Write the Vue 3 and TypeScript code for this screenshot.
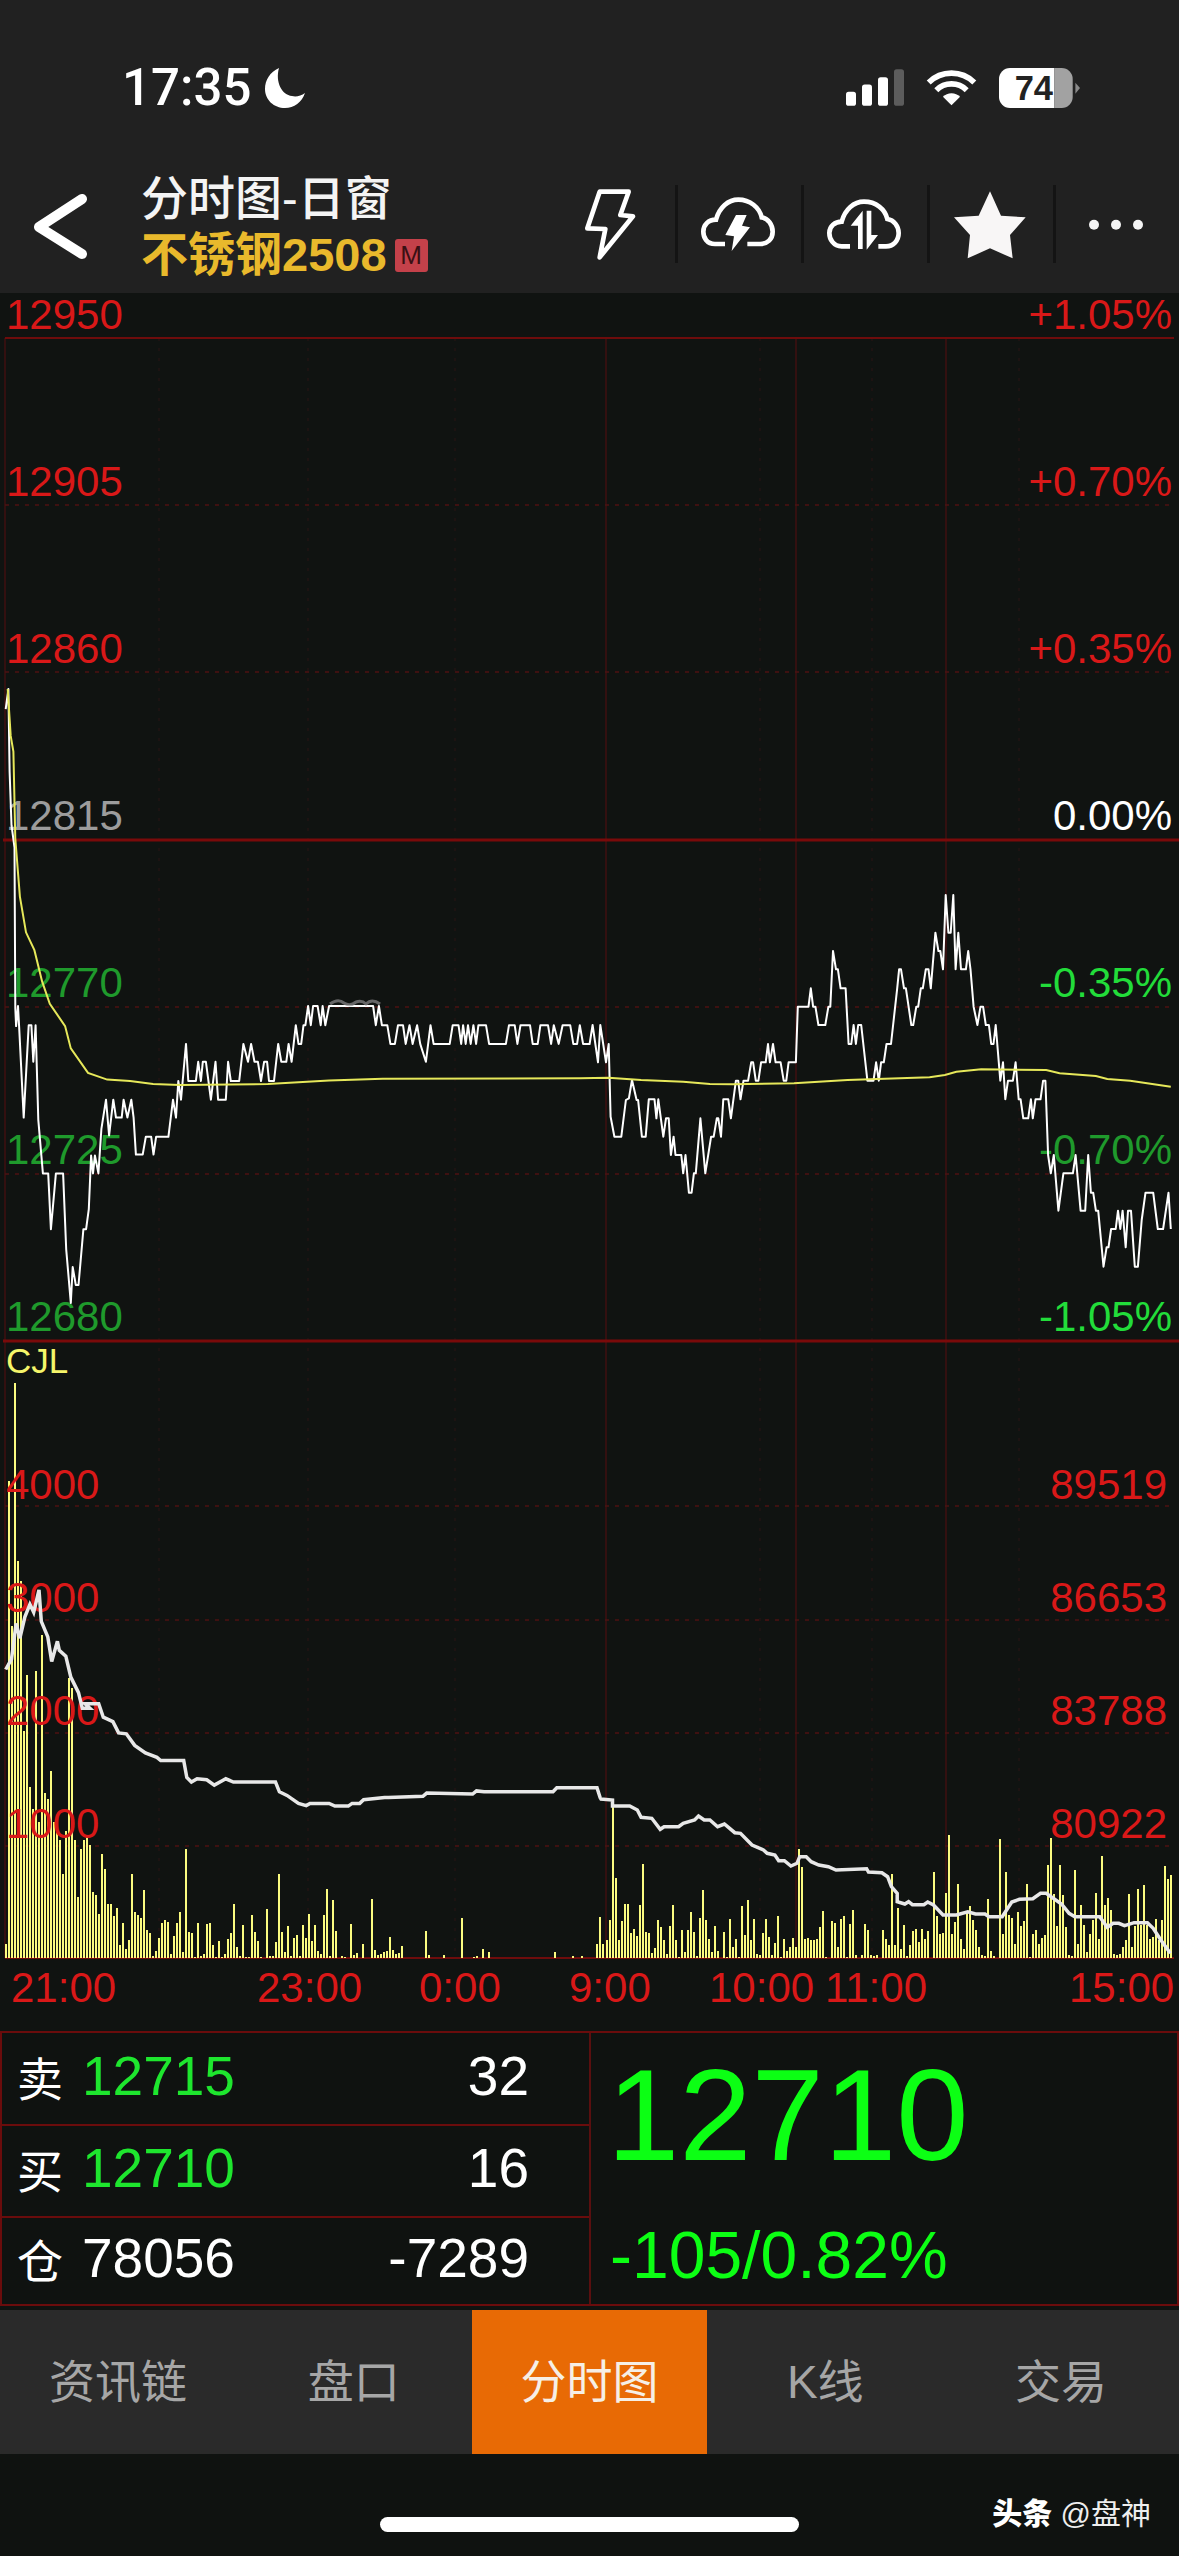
<template>
  <div class="phone">
    <!-- status bar -->
    <div class="status">
      <span class="clock">17:35</span>
      <svg class="moon" viewBox="0 0 40 40">
        <path d="M14 0C5 4 0 12 0 21c0 11 9 19 20 19 9 0 17-6 20-15-4 3-9 4-13 3C17 27 10 14 14 0Z" fill="#fff" />
      </svg>
      <div class="status-icons">
        <svg class="signal" viewBox="48 42 174 110">
          <rect x="48" y="110" width="30" height="42" rx="8" fill="#fff" />
          <rect x="96" y="88" width="30" height="64" rx="8" fill="#fff" />
          <rect x="144" y="66" width="30" height="86" rx="8" fill="#fff" />
          <rect x="192" y="42" width="30" height="110" rx="8" fill="#5c5c5c" />
        </svg>
        <svg class="wifi" viewBox="285 42 160 112">
          <path d="M296 83A98 98 0 0 1 434 83" fill="none" stroke="#fff" stroke-width="17" />
          <path d="M319 106A65 65 0 0 1 411 106" fill="none" stroke="#fff" stroke-width="17" />
          <path d="M365 152L339 126A37 37 0 0 1 391 126Z" fill="#fff" />
        </svg>
        <svg class="battery" viewBox="508 38 250 120">
          <path d="M541 38H675V158H541A33 33 0 0 1 508 125V71A33 33 0 0 1 541 38Z" fill="#fff" />
          <path d="M675 38H697A33 33 0 0 1 730 71V125A33 33 0 0 1 697 158H675Z" fill="#a2a2a2" />
          <path d="M738 82L752 98L738 115Z" fill="#8a8a8a" />
          <text x="613" y="135" text-anchor="middle" class="battery-text">74</text>
        </svg>
      </div>
    </div>

    <!-- nav -->
    <div class="nav">
      <svg class="back" viewBox="0 0 60 70">
        <path d="M51 7L8 35L51 62" fill="none" stroke="#fff" stroke-width="10" stroke-linecap="round" stroke-linejoin="round" />
      </svg>
      <div class="title">
        <div class="title-main">分时图-日窗</div>
        <div class="title-sub">不锈钢2508<span class="badge">M</span></div>
      </div>
      <div class="actions">
        <div class="action">
          <svg viewBox="12 25 240 240">
            <path d="M95 48H182L157 118L195 122L95 245L112 160L58 158Z" fill="none" stroke="#fff" stroke-width="14" stroke-linejoin="round" />
          </svg>
        </div>
        <div class="action sep">
          <svg viewBox="384 25 240 240">
            <path d="M465 205H435C410 205 400 185 400 168C400 148 415 132 438 132C448 95 475 72 505 72C540 72 568 95 575 125C595 128 608 148 608 168C608 190 592 205 570 205H532" fill="none" stroke="#fff" stroke-width="14" />
            <path d="M498 118H530L516 150L540 155L485 226L492 182L466 178Z" fill="#fff" />
          </svg>
        </div>
        <div class="action sep">
          <svg viewBox="762 25 240 240">
            <path d="M840 212H815C790 212 778 190 778 172C778 152 795 138 815 138C825 100 852 78 882 78C918 78 945 100 952 130C972 133 986 152 986 172C986 195 970 212 948 212H925" fill="none" stroke="#fff" stroke-width="14" />
            <path d="M878 105V220H864V150H842Z" fill="#fff" />
            <path d="M890 105H904V178H924L890 222Z" fill="#fff" />
          </svg>
        </div>
        <div class="action sep">
          <svg viewBox="390 25 240 240">
            <path d="M510 47L543 120L617 125L570 178L578 248L510 218L443 248L450 178L402 125L476 120Z" fill="#f8f6f6" />
          </svg>
        </div>
        <div class="action sep">
          <svg viewBox="768 25 240 240">
            <circle cx="822" cy="147" r="15" fill="#f4f4f4" />
            <circle cx="888" cy="147" r="15" fill="#f4f4f4" />
            <circle cx="954" cy="147" r="15" fill="#f4f4f4" />
          </svg>
        </div>
      </div>
    </div>

    <!-- chart, coordinates are page y -->
    <svg class="chart" viewBox="0 293 1179 1738">
      <line v-for="x in faintX" :key="'f' + x" :x1="x" :x2="x" y1="338" y2="1958" class="grid-faint" />
      <line v-for="x in mainX" :key="'v' + x" :x1="x" :x2="x" y1="338" y2="1958" class="grid-v" />
      <line v-for="y in dashY" :key="'d' + y" x1="5" x2="1174" :y1="y" :y2="y" class="grid-dash" />
      <line v-for="y in solidY" :key="'s' + y" x1="3" x2="1179" :y1="y" :y2="y" class="grid-solid" />
      <line x1="5" x2="1174" y1="338" y2="338" class="grid-top" />
      <line x1="5" x2="1174" y1="1958" y2="1958" class="grid-top" />

      <text v-for="l in priceLabels" :key="l.text" x="6" :y="l.y" :class="['axis', l.cls]">{{ l.text }}</text>
      <text v-for="l in pctLabels" :key="l.text" x="1172" :y="l.y" text-anchor="end" :class="['axis', l.cls]">{{ l.text }}</text>

      <polyline :points="pricePts" class="line-price" />
      <polyline :points="avgPts" class="line-avg" />
      <path d="M330 1004q8 -6 14 -1q6 4 12 -1q6 -2 10 2q6 -6 14 0" class="smudge" />

      <path :d="volumePath" class="bars" />
      <text x="6" y="1373" class="cjl">CJL</text>
      <text v-for="l in volLabels" :key="l.text" x="6" :y="l.y" class="axis red">{{ l.text }}</text>
      <text v-for="l in oiLabels" :key="l.text" x="1167" :y="l.y" text-anchor="end" class="axis red">{{ l.text }}</text>
      <polyline :points="oiPts" class="line-oi" />

      <text v-for="t in timeLabels" :key="t.text" :x="t.x" y="2002" class="axis time">{{ t.text }}</text>
    </svg>

    <!-- quote panel -->
    <div class="quote">
      <div class="book">
        <div class="book-row">
          <span class="book-label">卖</span><span class="book-price green">12715</span><span class="book-qty">32</span>
        </div>
        <div class="book-row">
          <span class="book-label">买</span><span class="book-price green">12710</span><span class="book-qty">16</span>
        </div>
        <div class="book-row">
          <span class="book-label">仓</span><span class="book-price">78056</span><span class="book-qty">-7289</span>
        </div>
      </div>
      <div class="last">
        <div class="last-price">12710</div>
        <div class="last-delta">-105/0.82%</div>
      </div>
    </div>

    <!-- tabs -->
    <div class="tabs">
      <div v-for="t in tabs" :key="t" :class="['tab', { active: t === '分时图' }]">{{ t }}</div>
    </div>

    <div class="bottom">
      <div class="home"></div>
      <div class="credit"><b>头条</b> @盘神</div>
    </div>
  </div>
</template>

<script setup lang="ts">
type Pt = [number, number];

// sampled points are stored in sampling units, then scaled into chart px
const scale = (raw: string, sx: number, sy: number, ox: number, oy: number): Pt[] =>
  raw
    .trim()
    .split(/\s+/)
    .map((p) => {
      const [x, y] = p.split(",").map(Number);
      return [x / sx + ox, y / sy + oy] as Pt;
    });

const toPoints = (pts: Pt[]) => pts.map(([x, y]) => `${x.toFixed(1)},${y.toFixed(1)}`).join(" ");

const priceNight = `15,110 22,65 25,250 30,370 38,420 40,780 42,820 47,775 50,820 62,1025 75,818 82,818 87,900 93,818
100,1030 112,1150 126,1150 133,1275 146,1150 165,1150 173,1320 185,1440 190,1360 198,1400 205,1400 218,1275 225,1275
232,1230 238,1110 243,1150 248,1110 257,1150 265,1050 277,985 285,1065 296,985 303,1025 318,1025 323,985 333,1025
343,985 349,1025 355,1108 373,1108 381,1068 395,1068 401,1108 408,1068 440,1068 452,985 460,1025 466,943 473,985
486,860 492,943 512,943 518,900 525,943 530,900 538,900 551,985 563,900 570,985 590,985 596,900 603,943 625,943
636,860 648,900 656,860 665,900 674,900 682,943 690,900 698,900 703,943 716,943 727,860 735,900 748,900 754,860
762,900 773,818 780,860 787,860 793,818 798,818 805,775 812,818 818,775 830,775 838,818 843,775 850,818 860,775
975,775 982,818 990,775 998,818 1012,818 1020,860 1032,860 1040,818 1053,818 1060,860 1070,818 1078,860 1090,818
1098,860 1113,900 1125,818 1133,860 1175,860 1183,818 1198,818 1205,860 1210,818 1217,860 1223,818 1230,860 1237,818
1244,860 1250,818 1270,818 1278,860 1322,860 1330,818 1345,818 1352,860 1360,818 1385,818 1392,860 1405,860 1412,818
1432,818 1440,860 1447,818 1460,860 1470,818 1490,818 1498,860 1508,860 1515,818`;

const priceDay = `8,612 25,612 33,555 47,667 53,555 68,667 75,612 80,830 90,890 108,890 120,780 128,775 136,720 148,780
152,780 162,890 172,890 180,778 195,778 200,835 205,778 218,890 225,835 232,835 238,945 245,890 250,945 265,945 270,1000
276,945 285,1058 292,1058 298,1000 303,1000 315,835 328,1000 343,890 350,890 358,835 362,835 369,890 375,778 388,778
395,835 408,722 414,722 420,778 428,722 440,722 448,667 453,667 460,722 467,722 474,667 486,667 492,612 497,667 505,612
512,667 525,667 533,722 540,722 546,667 565,667 570,500 598,500 604,445 610,500 616,500 624,555 642,555 650,500 655,500
662,333 670,388 675,388 682,445 695,445 703,612 710,612 716,555 722,612 728,555 736,555 752,722 768,722 775,667 782,722
788,667 795,667 802,612 814,612 830,445 835,388 840,388 848,445 853,445 867,555 872,555 880,500 885,500 892,445 897,445
905,388 912,388 918,445 930,278 938,333 943,333 950,388 957,165 964,278 970,278 977,165 983,388 990,278 997,388 1010,388
1016,333 1022,388 1030,500 1040,555 1048,500 1055,500 1062,555 1070,555 1076,612 1082,612 1088,555 1100,722 1107,667
1113,778 1120,722 1133,722 1140,667 1148,778 1153,778 1160,835 1173,835 1180,778 1185,835 1192,778 1205,778 1212,722
1218,722 1225,945 1232,1000 1240,945 1252,1112 1265,1000 1290,1000 1297,945 1310,1112 1322,1112 1330,945 1337,1058
1343,1058 1350,1112 1356,1112 1370,1280 1378,1222 1383,1222 1390,1167 1402,1167 1408,1112 1414,1167 1420,1112 1428,1222
1434,1112 1442,1112 1452,1280 1460,1280 1470,1140 1480,1058 1500,1058 1512,1167 1526,1167 1540,1058 1546,1167`;

const avgNight = `20,65 28,170 35,205 40,400 52,530 68,610 90,650 110,720 130,770 170,820 185,870 230,925 280,940 340,943
400,950 470,952 700,950 860,942 1000,938 1515,937`;

const avgDay = `0,715 75,713 160,720 270,725 340,732 400,733 560,730 700,720 915,712 955,705 985,695 1050,688 1220,690
1255,700 1350,708 1380,717 1440,722 1546,740`;

const oiNight = `15,738 30,715 42,635 52,668 65,620 78,592 88,610 102,560 108,630 125,665 135,720 150,675 155,695 172,708
185,755 205,790 215,825 235,825 222,815 258,815 270,845 295,855 310,880 330,882 352,908 380,925 410,935 420,942 480,942
488,980 500,990 515,983 540,985 560,997 590,983 610,990 720,990 730,1012 750,1020 780,1038 800,1043 810,1038 860,1038
875,1044 910,1044 920,1038 940,1038 950,1030 1005,1025 1015,1025 1105,1022 1115,1015 1235,1017 1245,1010 1265,1012
1445,1012 1455,1003 1560,1003 1568,1025`;

const oiDay = `55,597 85,600 85,618 130,618 150,630 160,652 188,655 210,688 220,680 258,680 270,670 300,660 310,648
325,660 340,660 360,680 378,672 405,698 420,700 450,735 480,750 490,760 510,765 520,782 535,782 552,798 568,790 575,770
592,770 605,785 625,795 650,800 670,810 750,806 755,816 790,818 805,830 815,860 830,880 830,905 850,912 860,905 870,914
900,914 910,906 925,915 950,945 985,945 1015,935 1035,942 1060,942 1070,950 1105,950 1130,906 1150,898 1185,896 1205,880
1220,880 1260,912 1280,940 1295,950 1360,950 1380,982 1395,970 1410,970 1425,977 1450,968 1485,968 1500,985 1520,1020
1545,1060`;

const pricePts = toPoints([...scale(priceNight, 2.613, 2.24, 0, 660), ...scale(priceDay, 2.617, 3, 580, 840)]);
const avgPts = toPoints([...scale(avgNight, 2.613, 2.24, 0, 660), ...scale(avgDay, 2.617, 3, 580, 840)]);
const oiPts = toPoints([...scale(oiNight, 2.613, 2.24, 0, 1340), ...scale(oiDay, 2.617, 3, 580, 1600)]);

// volume bars, one per minute slot
const volNight = [
  14, 477, 332, 575, 397, 377, 227, 283, 171, 149, 287, 136, 323, 165, 159, 187, 136, 127, 118, 84, 127, 280, 270, 118, 61,
  109, 118, 122, 113, 66, 63, 44, 104, 89, 54, 54, 42, 50, 13, 35, 9, 18, 84, 46, 43, 40, 68, 28, 25, 2, 7, 20, 35, 38, 36,
  4, 22, 35, 46, 6, 109, 26, 25, 1, 35, 2, 4, 34, 35, 13, 1, 17, 1, 4, 19, 25, 54, 11, 2, 33, 1, 1, 43, 26, 17, 1, 0, 49, 2,
  2, 16, 84, 26, 6, 32, 2, 20, 23, 2, 33, 20, 44, 17, 33, 7, 4, 43, 69, 2, 58, 27, 0, 2, 1, 0, 34, 3, 5, 0, 14, 0, 0, 59, 8,
  3, 4, 6, 7, 21, 8, 4, 5, 12,
];
const volSparse: Record<number, number> = { 140: 27, 141: 3, 146: 3, 152: 40, 156: 1, 157: 2, 159: 9, 161: 6, 183: 6, 189: 2, 192: 2 };
const volDay = [
  14, 41, 14, 18, 38, 151, 80, 18, 37, 54, 54, 25, 29, 22, 53, 94, 26, 25, 5, 10, 38, 31, 18, 4, 32, 53, 18, 1, 28, 6, 28,
  46, 26, 2, 40, 68, 38, 19, 6, 32, 7, 0, 26, 1, 39, 11, 19, 1, 52, 23, 58, 18, 39, 4, 3, 25, 39, 21, 3, 15, 42, 1, 19, 7,
  11, 20, 11, 109, 91, 19, 20, 18, 18, 19, 31, 47, 1, 0, 37, 35, 11, 39, 42, 1, 34, 48, 3, 0, 3, 34, 28, 3, 2, 3, 0, 28, 19,
  13, 84, 13, 50, 9, 33, 2, 13, 27, 29, 16, 29, 19, 27, 0, 86, 42, 24, 25, 65, 123, 24, 36, 74, 19, 9, 46, 52, 38, 28, 11,
  3, 2, 59, 7, 2, 0, 119, 24, 86, 43, 40, 14, 46, 32, 37, 74, 1, 24, 28, 14, 20, 23, 93, 120, 64, 32, 93, 63, 31, 3, 2, 88,
  14, 53, 33, 6, 24, 38, 65, 19, 102, 53, 60, 48, 4, 3, 4, 11, 18, 64, 11, 32, 69, 33, 73, 33, 19, 21, 39, 18, 38, 92, 79, 83,
];

const baseY = 1958;
const slotX = (i: number) => Math.round(5.7 + 3.004 * i);
const volumePath = [
  ...volNight.map((h, i) => [i, h]),
  ...Object.entries(volSparse).map(([i, h]) => [Number(i), h]),
  ...volDay.map((h, i) => [197 + i, h]),
]
  .filter(([, h]) => h > 0)
  .map(([i, h]) => `M${slotX(i)} ${baseY}v${-h}`)
  .join("");

const mainX = [5, 606, 796, 946];
const faintX = [159, 308, 455, 760, 872, 1019];
const dashY = [505, 672, 1007, 1174, 1506, 1620, 1733, 1846];
const solidY = [840, 1341];

const priceLabels = [
  { text: "12950", y: 329, cls: "red" },
  { text: "12905", y: 496, cls: "red" },
  { text: "12860", y: 663, cls: "red" },
  { text: "12815", y: 830, cls: "gray" },
  { text: "12770", y: 997, cls: "dim" },
  { text: "12725", y: 1164, cls: "dim" },
  { text: "12680", y: 1331, cls: "dim" },
];
const pctLabels = [
  { text: "+1.05%", y: 329, cls: "red" },
  { text: "+0.70%", y: 496, cls: "red" },
  { text: "+0.35%", y: 663, cls: "red" },
  { text: "0.00%", y: 830, cls: "white" },
  { text: "-0.35%", y: 997, cls: "bright" },
  { text: "-0.70%", y: 1164, cls: "dim" },
  { text: "-1.05%", y: 1331, cls: "bright" },
];
const volLabels = [
  { text: "4000", y: 1499 },
  { text: "3000", y: 1612 },
  { text: "2000", y: 1725 },
  { text: "1000", y: 1838 },
];
const oiLabels = [
  { text: "89519", y: 1499 },
  { text: "86653", y: 1612 },
  { text: "83788", y: 1725 },
  { text: "80922", y: 1838 },
];
const timeLabels = [
  { text: "21:00", x: 11 },
  { text: "23:00", x: 257 },
  { text: "0:00", x: 419 },
  { text: "9:00", x: 569 },
  { text: "10:00", x: 709 },
  { text: "11:00", x: 825 },
  { text: "15:00", x: 1069 },
];

const tabs = ["资讯链", "盘口", "分时图", "K线", "交易"];
</script>

<style>
html,
body {
  margin: 0;
  background: #0f1210;
}
</style>

<style scoped>
.phone {
  width: 1179px;
  height: 2556px;
  display: flex;
  flex-direction: column;
  background: #0f1210;
  font-family: "Liberation Sans", "Noto Sans CJK SC", sans-serif;
  overflow: hidden;
}

.status {
  height: 175px;
  flex: none;
  display: flex;
  align-items: center;
  padding-left: 122px;
  box-sizing: border-box;
  background: #212121;
  color: #fff;
}

.clock {
  font-family: Roboto, "Liberation Sans", sans-serif;
  font-size: 51px;
  font-weight: 500;
  line-height: 1;
}

.moon {
  width: 40px;
  height: 40px;
  margin-left: 14px;
}

.status-icons {
  margin-left: auto;
  margin-right: 97px;
  display: flex;
  align-items: center;
  gap: 21px;
}

.signal {
  width: 58px;
  height: 37px;
}

.wifi {
  width: 53px;
  height: 37px;
}

.battery {
  width: 83px;
  height: 40px;
}

.battery-text {
  font-family: "Liberation Sans", sans-serif;
  font-size: 104px;
  font-weight: 700;
  fill: #222;
}

.nav {
  height: 118px;
  flex: none;
  display: flex;
  align-items: center;
  padding-bottom: 14px;
  box-sizing: border-box;
  background: #212121;
  position: relative;
}

.back {
  width: 60px;
  height: 70px;
  margin-left: 31px;
  flex: none;
}

.title {
  margin-left: 50px;
  display: flex;
  flex-direction: column;
}

.title-main {
  font-size: 47px;
  font-weight: 500;
  line-height: 56px;
  color: #f4f4f4;
}

.title-sub {
  display: flex;
  align-items: center;
  font-size: 47px;
  line-height: 56px;
  font-weight: 700;
  color: #e9b92c;
}

.badge {
  width: 33px;
  height: 33px;
  margin-left: 8px;
  border-radius: 3px;
  background: #c4414a;
  color: #3a1014;
  font-size: 26px;
  font-weight: 400;
  line-height: 33px;
  text-align: center;
}

.actions {
  margin-left: auto;
  display: flex;
  margin-bottom: 7px;
}

.action {
  width: 126px;
  height: 78px;
  display: flex;
  align-items: center;
  justify-content: center;
  box-sizing: border-box;
}

.action.sep {
  box-shadow: inset 3px 0 0 #141414;
}

.action svg {
  width: 80px;
  height: 80px;
  flex: none;
}

.chart {
  display: block;
  width: 1179px;
  height: 1738px;
  flex: none;
  background: #101311;
  overflow: visible;
}

.grid-faint {
  stroke: #2b1414;
  stroke-width: 1;
  stroke-dasharray: 3 7;
}

.grid-v {
  stroke: #3f1010;
  stroke-width: 1.5;
}

.grid-dash {
  stroke: #4d1212;
  stroke-width: 1.5;
  stroke-dasharray: 4 6;
}

.grid-solid {
  stroke: #7a0a0a;
  stroke-width: 3;
}

.grid-top {
  stroke: #6e0c0c;
  stroke-width: 2;
}

.axis {
  font-size: 42px;
}

.red {
  fill: #d91818;
}

.gray {
  fill: #9c9c9c;
}

.white {
  fill: #fff;
}

.dim {
  fill: #1f9a2c;
}

.bright {
  fill: #22dc3a;
}

.time {
  fill: #d91818;
}

.cjl {
  font-size: 35px;
  fill: #f5f56a;
}

.line-price {
  fill: none;
  stroke: #fff;
  stroke-width: 2;
  stroke-linejoin: round;
}

.line-avg {
  fill: none;
  stroke: #e6e85a;
  stroke-width: 2;
}

.line-oi {
  fill: none;
  stroke: #e8e8e8;
  stroke-width: 3.5;
  stroke-linejoin: miter;
}

.smudge {
  fill: none;
  stroke: #8c8a8c;
  stroke-width: 3;
  opacity: 0.7;
}

.bars {
  fill: none;
  stroke: #fbfb80;
  stroke-width: 2;
  shape-rendering: crispEdges;
}

.quote {
  height: 275px;
  flex: none;
  display: grid;
  grid-template-columns: 589px 1fr;
  box-sizing: border-box;
  border: 2px solid #6a0c0c;
}

.book {
  display: grid;
  grid-template-rows: 91px 92px 1fr;
  border-right: 2px solid #5a0f0f;
}

.book-row {
  display: flex;
  align-items: center;
  padding: 0 60px 6px 15px;
  color: #fff;
}

.book-row + .book-row {
  border-top: 2px solid #6a0c0c;
}

.book-label {
  font-size: 46px;
  width: 65px;
  flex: none;
}

.book-price {
  font-size: 55px;
}

.book-price.green {
  color: #1ee62e;
}

.book-qty {
  margin-left: auto;
  font-size: 55px;
}

.last {
  color: #0cff14;
}

.last-price {
  padding: 2px 0 0 16px;
  font-size: 130px;
  line-height: 160px;
}

.last-delta {
  margin-top: 20px;
  padding-left: 19px;
  font-size: 66px;
  line-height: 80px;
}

.tabs {
  height: 144px;
  margin-top: 4px;
  flex: none;
  display: grid;
  grid-template-columns: repeat(5, 1fr);
  background: #2a2a2a;
}

.tab {
  display: flex;
  align-items: center;
  justify-content: center;
  padding-bottom: 8px;
  box-sizing: border-box;
  font-size: 46px;
  color: #a6a6a6;
}

.tab.active {
  background: #e86a05;
  color: #f6efe6;
}

.bottom {
  flex: 1;
  position: relative;
  display: flex;
  justify-content: center;
  padding-top: 63px;
  box-sizing: border-box;
}

.home {
  width: 419px;
  height: 15px;
  border-radius: 8px;
  background: #fff;
}

.credit {
  position: absolute;
  right: 28px;
  top: 40px;
  font-size: 30px;
  line-height: 40px;
  color: #eee;
}

.credit b {
  color: #fff;
  font-weight: 900;
}
</style>
